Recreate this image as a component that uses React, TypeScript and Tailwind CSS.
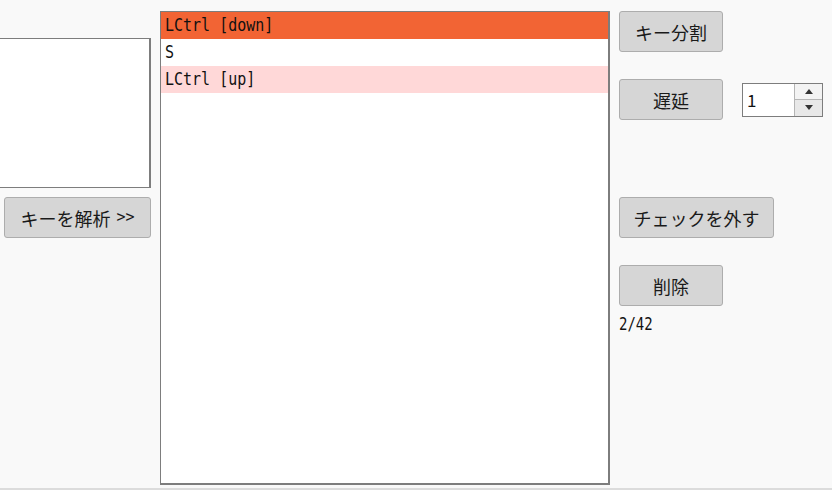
import React from "react";

const font = { fontFamily: '"Noto Sans CJK JP", "Noto Sans", sans-serif' };
const mono = { fontFamily: '"DejaVu Sans Mono", "Liberation Mono", monospace' };

function Btn({ w, children }: { w: string; children: React.ReactNode }) {
  return (
    <button
      className={`${w} h-[41px] bg-[#d6d6d6] border border-[#adadad] rounded-[3px] text-[18px] text-[#1a1a1a] flex items-center justify-center leading-none`}
      style={font}
    >
      {children}
    </button>
  );
}

function Row({ bg, text }: { bg: string; text: string }) {
  return (
    <div className={`h-[27px] ${bg} px-[4px] flex items-center`}>
      <span className="text-[15px] leading-none inline-block scale-y-[1.2] origin-center whitespace-pre" style={mono}>
        {text}
      </span>
    </div>
  );
}

export default function App() {
  return (
    <div
      className="w-[832px] h-[490px] bg-[#f9f9f9] border-b-2 border-[#dcdcdc] overflow-hidden flex text-[#111]"
      style={font}
    >
      {/* left column */}
      <div className="w-[151px] shrink-0 flex flex-col pt-[38px]">
        <div className="w-[171px] -ml-[20px] h-[150px] bg-white border border-[#7d7d7d] border-r-2" />
        <div className="mt-[9px] ml-[4px]">
          <Btn w="w-[147px]">
            キーを解析
            <span className="ml-[6px] text-[15px]" style={mono}>&gt;&gt;</span>
          </Btn>
        </div>
      </div>

      {/* list */}
      <div className="ml-[9px] mt-[11px] w-[450px] h-[474px] shrink-0 bg-white border border-[#7d7d7d] border-r-2 border-b-2 flex flex-col">
        <Row bg="bg-[#f26434]" text="LCtrl [down]" />
        <Row bg="bg-white" text="S" />
        <Row bg="bg-[#ffd8d8]" text="LCtrl [up]" />
      </div>

      {/* right column */}
      <div className="ml-[9px] pt-[11px] flex flex-col items-start">
        <Btn w="w-[104px]">キー分割</Btn>
        <div className="mt-[27px] flex items-center">
          <Btn w="w-[104px]">遅延</Btn>
          <div className="ml-[19px] w-[81px] h-[34px] bg-white border border-[#7d7d7d] flex">
            <div className="flex-1 flex items-center pl-[4px] text-[17px] leading-none">1</div>
            <div className="w-[28px] flex flex-col border-l border-[#b5b5b5]">
              <div className="flex-1 bg-[#f3f3f3] flex items-center justify-center border-b border-[#b5b5b5]">
                <svg width="8" height="5" viewBox="0 0 8 5"><path d="M4 0 L8 5 L0 5 Z" fill="#333" /></svg>
              </div>
              <div className="flex-1 bg-[#e8e8e8] flex items-center justify-center">
                <svg width="8" height="5" viewBox="0 0 8 5"><path d="M0 0 L8 0 L4 5 Z" fill="#333" /></svg>
              </div>
            </div>
          </div>
        </div>
        <div className="mt-[77px]">
          <Btn w="w-[155px]">チェックを外す</Btn>
        </div>
        <div className="mt-[27px]">
          <Btn w="w-[104px]">削除</Btn>
        </div>
        <div className="mt-[10px] text-[14px] leading-none inline-block scale-y-[1.2] origin-top-left" style={mono}>2/42</div>
      </div>
    </div>
  );
}
